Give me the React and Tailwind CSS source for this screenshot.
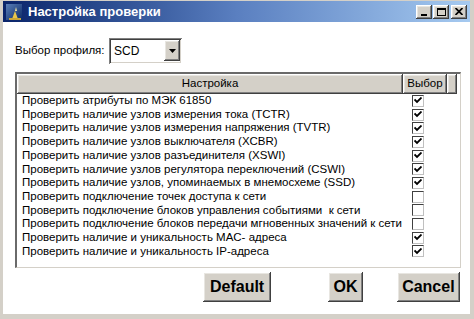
import React from 'react';

const RAISED =
  'shadow-[inset_-1px_-1px_0_#404040,inset_1px_1px_0_#ffffff,inset_-2px_-2px_0_#808080,inset_2px_2px_0_#e8e6e1]';
const SUNKEN =
  'shadow-[inset_1px_1px_0_#808080,inset_-1px_-1px_0_#ffffff,inset_2px_2px_0_#404040,inset_-2px_-2px_0_#d4d0c8]';

const CHECKS = [
  { label: 'Проверить атрибуты по МЭК 61850', on: true },
  { label: 'Проверить наличие узлов измерения тока (TCTR)', on: true },
  { label: 'Проверить наличие узлов измерения напряжения (TVTR)', on: true },
  { label: 'Проверить наличие узлов выключателя (XCBR)', on: true },
  { label: 'Проверить наличие узлов разъединителя (XSWI)', on: true },
  { label: 'Проверить наличие узлов регулятора переключений (CSWI)', on: true },
  { label: 'Проверить наличие узлов, упоминаемых в мнемосхеме (SSD)', on: true },
  { label: 'Проверить подключение точек доступа к сети', on: false },
  { label: 'Проверить подключение блоков управления событиями\u00a0 к сети', on: false },
  { label: 'Проверить подключение блоков передачи мгновенных значений к сети', on: false },
  { label: 'Проверить наличие и уникальность MAC- адреса', on: true },
  { label: 'Проверить наличие и уникальность IP-адреса', on: true },
];

const AppIcon = () => (
  <svg width="16" height="16" viewBox="0 0 16 16">
    <defs>
      <linearGradient id="ig" x1="0" y1="0" x2="1" y2="1">
        <stop offset="0" stopColor="#5a7fb8" />
        <stop offset="1" stopColor="#0b2a66" />
      </linearGradient>
    </defs>
    <rect x="0" y="0" width="16" height="16" fill="url(#ig)" />
    <path d="M9 7 L12 15 L6 15 Z" fill="#e8c64a" />
    <rect x="3" y="14" width="12" height="2" fill="#c9a635" />
    <path d="M10 3 L11 7 L9 7 Z" fill="#f4e6a0" />
  </svg>
);

const CaptionButton = ({ children }) => (
  <div className={`w-[16px] h-[14px] bg-[#d4d0c8] flex items-center justify-center ${RAISED}`}>
    {children}
  </div>
);

const CheckBox = ({ on }) => (
  <div className="w-[12px] h-[12px] bg-white border border-t-[#404040] border-l-[#404040] border-b-[#c0c0c0] border-r-[#c0c0c0] flex items-center justify-center">
    {on && (
      <svg width="8" height="7" viewBox="0 0 8 7">
        <path d="M0.5 2.5 L3 5 L7.5 0.5" stroke="#000" strokeWidth="1.8" fill="none" />
      </svg>
    )}
  </div>
);

const Button = ({ children, className }) => (
  <button
    className={`h-[30px] bg-[#d4d0c8] text-[16px] font-bold text-black flex items-center justify-center ${RAISED} ${className}`}
  >
    {children}
  </button>
);

export default function App() {
  return (
    <div
      className="w-[474px] h-[319px] bg-[#d4d0c8] pl-[3px] pr-[4px] pb-[5px] pt-[1px] flex flex-col overflow-hidden"
      style={{ fontFamily: '"Liberation Sans", Arial, sans-serif' }}
    >
      {/* title bar */}
      <div className="h-[21px] shrink-0 flex items-center pl-[3px] pr-[3px] bg-gradient-to-r from-[#0a246a] via-[#5a7fc0] to-[#a6caf0]">
        <AppIcon />
        <span className="ml-[6px] text-white font-bold text-[13px] leading-none">Настройка проверки</span>
        <div className="ml-auto flex items-center">
          <CaptionButton>
            <div className="w-[6px] h-[2px] bg-black mt-[6px] -ml-[1px]" />
          </CaptionButton>
          <div className="w-[1px]" />
          <CaptionButton>
            <div className="w-[9px] h-[8px] border border-black border-t-2" />
          </CaptionButton>
          <div className="w-[2px]" />
          <CaptionButton>
            <svg width="8" height="7" viewBox="0 0 8 7">
              <path d="M0.5 0 L7.5 7 M7.5 0 L0.5 7" stroke="#000" strokeWidth="1.7" />
            </svg>
          </CaptionButton>
        </div>
      </div>

      {/* client area */}
      <div className="flex-1 bg-white flex flex-col pl-[12px] pr-[10px] pt-[16px]">
        <div className="flex items-center h-[25px]">
          <span className="text-[11.5px] text-black w-[94px]">Выбор профиля:</span>
          <div className={`w-[73px] h-[26px] bg-white flex items-center pl-[5px] pr-[2px] ${SUNKEN}`}>
            <span className="text-[12px] text-black flex-1">SCD</span>
            <div className={`w-[16px] h-[21px] bg-[#d4d0c8] flex items-center justify-center ${RAISED}`}>
              <svg width="7" height="4" viewBox="0 0 7 4">
                <path d="M0 0 H7 L3.5 4 Z" fill="#000" />
              </svg>
            </div>
          </div>
        </div>

        {/* grid */}
        <div className="mt-[9px] h-[196px] border-t-2 border-l-2 border-t-[#6a6a6a] border-l-[#6a6a6a] border-b border-r border-b-[#d4d0c8] border-r-[#d4d0c8] bg-white flex flex-col mr-[-1px]">
          <div className="flex h-[20px] shrink-0">
            <div className={`w-[386px] bg-[#d4d0c8] flex items-center justify-center text-[11.5px] text-black ${RAISED}`}>
              Настройка
            </div>
            <div className={`w-[44px] bg-[#d4d0c8] flex items-center justify-center text-[11.5px] text-black ${RAISED}`}>
              Выбор
            </div>
            <div className={`w-[10px] bg-[#d4d0c8] ${RAISED}`} />
          </div>
          <div className="flex flex-col">
            {CHECKS.map((c) => (
              <div key={c.label} className="flex items-center h-[13.7px]">
                <div className="w-[386px] pl-[5px] text-[11.5px] leading-none text-black whitespace-nowrap">
                  {c.label}
                </div>
                <div className="pl-[9px]">
                  <CheckBox on={c.on} />
                </div>
              </div>
            ))}
          </div>
        </div>

        <div className="flex items-center mt-[4px]">
          <Button className="w-[69px] ml-[188px]">Default</Button>
          <Button className="w-[35px] ml-[57px]">OK</Button>
          <Button className="w-[64px] ml-[34px]">Cancel</Button>
        </div>
      </div>
    </div>
  );
}
